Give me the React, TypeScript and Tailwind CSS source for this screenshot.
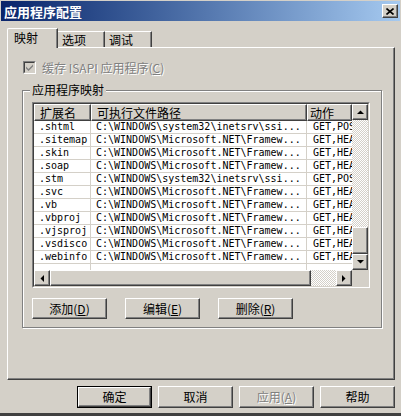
const raised =
  "border border-t-white border-l-white border-r-[#404040] border-b-[#404040] shadow-[inset_-1px_-1px_0_#808080]";
const dither =
  "bg-[image:repeating-conic-gradient(#d4d0c8_0_25%,#ffffff_0_50%)] bg-[length:2px_2px]";

const rows: [string, boolean][] = [
  [".shtml", true],
  [".sitemap", false],
  [".skin", false],
  [".soap", false],
  [".stm", true],
  [".svc", false],
  [".vb", false],
  [".vbproj", false],
  [".vjsproj", false],
  [".vsdisco", false],
  [".webinfo", false],
  ["", false],
];

const Arrow = ({ dir }: { dir: "up" | "down" | "left" | "right" }) => {
  const pts = {
    up: "0,4 7,4 3.5,0.5",
    down: "0,0 7,0 3.5,3.5",
    left: "4,0 4,7 0.5,3.5",
    right: "0,0 0,7 3.5,3.5",
  }[dir];
  const vertical = dir === "up" || dir === "down";
  return (
    <svg width={vertical ? 7 : 4} height={vertical ? 4 : 7} viewBox={vertical ? "0 0 7 4" : "0 0 4 7"}>
      <polygon points={pts} fill="#000" />
    </svg>
  );
};

const ScrollBtn = ({ dir }: { dir: "up" | "down" | "left" | "right" }) => (
  <div className={`w-[16px] h-[16px] shrink-0 flex items-center justify-center bg-[#d4d0c8] ${raised}`}>
    <Arrow dir={dir} />
  </div>
);

const Btn = ({ children, w = "w-[75px]", h = "h-[21px]" }: { children: React.ReactNode; w?: string; h?: string }) => (
  <div className={`${w} ${h} flex items-center justify-center bg-[#d4d0c8] text-[12px] leading-none text-black ${raised}`}>
    {children}
  </div>
);

const mono = "font-['DejaVu_Sans_Mono','Liberation_Mono',monospace] text-[10px]";

export default function App() {
  return (
    <div className="w-[401px] h-[416px] bg-[#d4d0c8] flex flex-col border-b-[3px] border-[#404040] font-['Noto_Sans_CJK_SC','Liberation_Sans',sans-serif] text-black select-none">
      {/* title bar */}
      <div className="mt-[1px] mx-[1px] h-[20px] flex items-center pl-[3px] pr-[2px] bg-gradient-to-r from-[#0a246a] to-[#a6caf0]">
        <span className="text-white font-bold text-[13px] leading-none">应用程序配置</span>
        <div className={`ml-auto w-[16px] h-[14px] flex items-center justify-center bg-[#d4d0c8] ${raised}`}>
          <svg width="8" height="7" viewBox="0 0 8 7">
            <path d="M0.5 0.5 L7.5 6.5 M7.5 0.5 L0.5 6.5" stroke="#000" strokeWidth="1.6" />
          </svg>
        </div>
      </div>

      {/* tabs */}
      <div className="mt-[7px] ml-[7px] h-[20px] flex items-end">
        <div className="relative z-10 w-[51px] h-[20px] bg-[#d4d0c8] border-l border-t border-white border-r border-r-[#404040] shadow-[inset_-1px_0_0_#808080] rounded-tl-[2px] flex items-start pt-[3px] pl-[6px] text-[12px] leading-none">
          映射
        </div>
        <div className="w-[47px] h-[16px] mb-[1px] border-t border-white border-r border-r-[#404040] shadow-[inset_-1px_0_0_#808080] flex items-center pl-[4px] text-[12px] leading-none">
          选项
        </div>
        <div className="w-[47px] h-[16px] mb-[1px] border-t border-white border-r border-r-[#404040] shadow-[inset_-1px_0_0_#808080] flex items-center pl-[4px] text-[12px] leading-none">
          调试
        </div>
      </div>

      {/* tab panel */}
      <div className="-mt-[1px] ml-[7px] w-[388px] h-[333px] border border-t-white border-l-white border-r-[#404040] border-b-[#404040] shadow-[inset_-1px_-1px_0_#808080] flex flex-col pt-[13px]">
        <div className="ml-[15px] flex items-center gap-[4px] h-[13px]">
          <div className="w-[13px] h-[13px] border border-t-[#808080] border-l-[#808080] border-b-white border-r-white">
            <div className="w-full h-full border border-t-[#404040] border-l-[#404040] border-b-[#d4d0c8] border-r-[#d4d0c8] flex items-center justify-center">
              <svg width="7" height="7" viewBox="0 0 7 7">
                <path d="M0 2.5 L2.5 5 L7 0.5 L7 2.5 L2.5 7 L0 4.5 Z" fill="#808080" />
              </svg>
            </div>
          </div>
          <span className="ml-[2px] text-[12px] leading-none text-[#808080] [text-shadow:1px_1px_0_#fff]">
            缓存 ISAPI 应用程序(<u>C</u>)
          </span>
        </div>

        {/* group box */}
        <div className="relative mt-[16px] ml-[14px] w-[360px] h-[238px] border border-[#808080] shadow-[inset_1px_1px_0_#fff,1px_1px_0_#fff] pt-[11px] pl-[9px]">
          <span className="absolute -top-[8px] left-[7px] px-[2px] bg-[#d4d0c8] text-[12px] leading-[14px]">应用程序映射</span>

          {/* list view */}
          <div className="w-[338px] h-[186px] border border-t-[#808080] border-l-[#808080] border-b-white border-r-white">
            <div className="w-full h-full border border-t-[#404040] border-l-[#404040] border-b-[#d4d0c8] border-r-[#d4d0c8] bg-white flex flex-col">
              <div className="flex">
                <div className="w-[318px] flex flex-col">
                  <div className="flex h-[17px] bg-[#d4d0c8] text-[12px] leading-none">
                    <div className={`w-[57px] flex items-center pl-[5px] ${raised}`}>扩展名</div>
                    <div className={`w-[216px] flex items-center pl-[5px] ${raised}`}>可执行文件路径</div>
                    <div className={`w-[45px] flex items-center pl-[2px] ${raised}`}>动作</div>
                  </div>
                  <div className="h-[149px] overflow-hidden">
                    {rows.map(([ext, ssi], i) => (
                      <div key={i} className={`flex h-[13px] border-b border-[#d4d0c8] ${mono} leading-[12px] whitespace-nowrap`}>
                        <div className="w-[57px] shrink-0 pl-[5px] border-r border-[#d4d0c8] overflow-hidden">{ext}</div>
                        <div className="w-[216px] shrink-0 pl-[5px] border-r border-[#d4d0c8] overflow-hidden">
                          {ext && (ssi ? "C:\\WINDOWS\\system32\\inetsrv\\ssi..." : "C:\\WINDOWS\\Microsoft.NET\\Framew...")}
                        </div>
                        <div className="w-[45px] shrink-0 pl-[6px] overflow-hidden">
                          {ext && (ssi ? "GET,POST" : "GET,HEAD,POST,DEBUG")}
                        </div>
                      </div>
                    ))}
                  </div>
                </div>
                {/* vertical scrollbar */}
                <div className="w-[16px] h-[166px] flex flex-col">
                  <ScrollBtn dir="up" />
                  <div className={`flex-1 ${dither}`} />
                  <div className={`h-[27px] bg-[#d4d0c8] ${raised}`} />
                  <ScrollBtn dir="down" />
                </div>
              </div>
              {/* horizontal scrollbar */}
              <div className="flex h-[16px]">
                <ScrollBtn dir="left" />
                <div className={`w-[261px] bg-[#d4d0c8] ${raised}`} />
                <div className={`w-[25px] ${dither}`} />
                <ScrollBtn dir="right" />
                <div className="w-[16px] bg-[#d4d0c8]" />
              </div>
            </div>
          </div>

          <div className="mt-[10px] flex gap-[18px]">
            <Btn>
              添加(<u>D</u>)
            </Btn>
            <Btn>
              编辑(<u>E</u>)
            </Btn>
            <Btn>
              删除(<u>R</u>)
            </Btn>
          </div>
        </div>
      </div>

      {/* dialog buttons */}
      <div className="mt-[6px] ml-[77px] flex gap-[6px]">
        <div className="border border-black">
          <Btn w="w-[73px]" h="h-[20px]">确定</Btn>
        </div>
        <Btn h="h-[22px]">取消</Btn>
        <Btn h="h-[22px]">
          <span className="text-[#808080] [text-shadow:1px_1px_0_#fff]">
            应用(<u>A</u>)
          </span>
        </Btn>
        <Btn h="h-[22px]">帮助</Btn>
      </div>
    </div>
  );
}
